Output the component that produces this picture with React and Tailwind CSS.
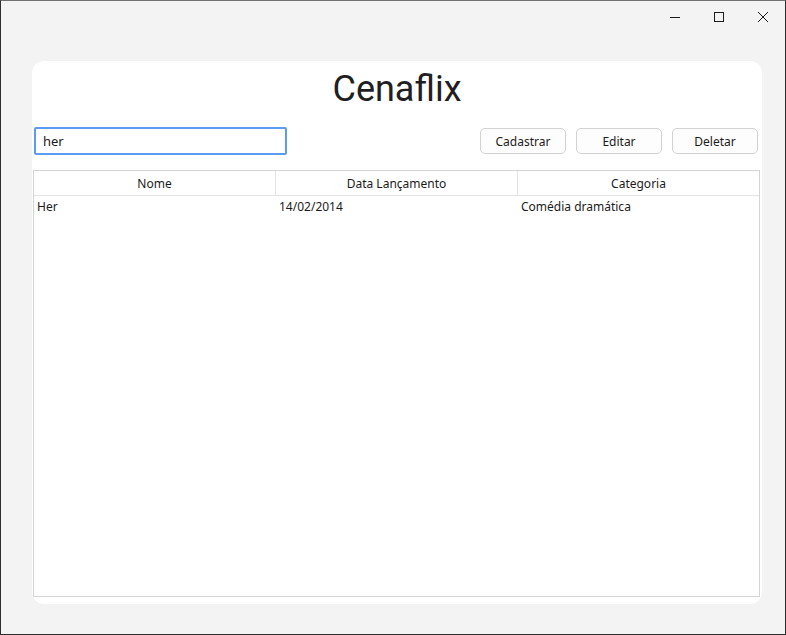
const font = { fontFamily: '"Segoe UI", "Noto Sans", sans-serif' };

function App() {
  const columns = ['Nome', 'Data Lançamento', 'Categoria'];
  const rows = [['Her', '14/02/2014', 'Comédia dramática']];

  return (
    <div
      className="w-[786px] h-[635px] flex flex-col bg-[#f3f3f3] border border-[#2d2d2d] border-t-[#707070] text-[#1b1b1b]"
      style={font}
    >
      {/* title bar */}
      <div className="h-[32px] flex justify-end shrink-0">
        <div className="w-[44px] flex items-center justify-center">
          <svg width="10" height="10" viewBox="0 0 10 10">
            <line x1="0" y1="5.5" x2="10" y2="5.5" stroke="#1b1b1b" strokeWidth="1" />
          </svg>
        </div>
        <div className="w-[44px] flex items-center justify-center">
          <svg width="10" height="10" viewBox="0 0 10 10">
            <rect x="0.5" y="0.5" width="9" height="9" fill="none" stroke="#1b1b1b" strokeWidth="1" />
          </svg>
        </div>
        <div className="w-[44px] flex items-center justify-center">
          <svg width="10" height="10" viewBox="0 0 10 10">
            <line x1="0" y1="0" x2="10" y2="10" stroke="#1b1b1b" strokeWidth="1" />
            <line x1="10" y1="0" x2="0" y2="10" stroke="#1b1b1b" strokeWidth="1" />
          </svg>
        </div>
      </div>

      {/* card */}
      <div className="ml-[31px] mr-[23px] mt-[28px] h-[543px] bg-white rounded-[12px] flex flex-col px-[1px]">
        <div
          className="h-[54px] pt-[2px] flex items-center justify-center text-[36px] text-[#1f1f1f]"
          style={{ fontFamily: 'Roboto, sans-serif' }}
        >
          Cenaflix
        </div>

        <div className="mt-[12px] flex items-center">
          <input
            defaultValue="her"
            className="ml-[1px] w-[253px] h-[28px] border-2 border-[#5b9bf5] rounded-[2px] px-[7px] text-[13px] outline-none"
            style={font}
          />
          <div className="ml-auto mr-[3px] flex gap-[10px]">
            {['Cadastrar', 'Editar', 'Deletar'].map((b) => (
              <button
                key={b}
                className="w-[86px] h-[26px] pt-[1px] rounded-[5px] border border-[#d2d2d2] bg-[#fdfdfd] text-[12px]"
              >
                {b}
              </button>
            ))}
          </div>
        </div>

        <div className="mt-[15px] w-[727px] h-[427px] border border-[#d4d4d4] flex flex-col">
          <div className="grid grid-cols-[242px_242px_241px] h-[25px] border-b border-[#e3e3e3] text-[12px]">
            {columns.map((c, i) => (
              <div
                key={c}
                className={`flex items-center justify-center pt-[1px] ${i < 2 ? 'border-r border-[#e3e3e3]' : ''}`}
              >
                {c}
              </div>
            ))}
          </div>
          {rows.map((r) => (
            <div key={r[0]} className="grid grid-cols-[242px_242px_241px] h-[22px] text-[12px]">
              {r.map((v, i) => (
                <div key={i} className="flex items-center px-[3px]">
                  {v}
                </div>
              ))}
            </div>
          ))}
        </div>
      </div>
    </div>
  );
}

export default App;
